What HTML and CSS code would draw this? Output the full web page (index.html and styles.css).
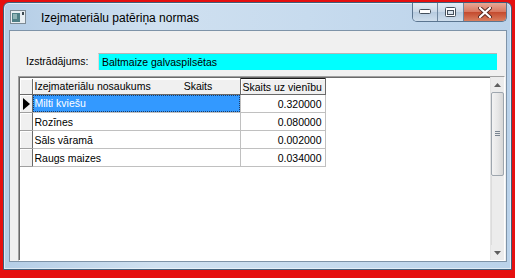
FILE: index.html
```html
<!DOCTYPE html>
<html>
<head>
    <title>Izejmateriālu patēriņa normas</title>
    <link rel="stylesheet" href="styles.css">
</head>
<body>
<div class="screen">
    <div class="window">

        <!-- Title bar -->
        <div class="titlebar">
            <svg class="app-icon" width="16" height="14" viewBox="0 0 16 14">
                <rect x="0.5" y="0.5" width="15" height="13" fill="#e8eef2" stroke="#7d8a94"/>
                <rect x="2" y="3" width="8" height="9" fill="#4f7f86"/>
                <rect x="3" y="4" width="4" height="5" fill="#8fb3b5"/>
                <rect x="12" y="2" width="2" height="3" fill="#3e4a52"/>
            </svg>
            <span class="title">Izejmateriālu patēriņa normas</span>
            <div class="caption-buttons">
                <div class="cap-btn cap-min">
                    <svg width="12" height="6" viewBox="0 0 12 6"><rect x="0.5" y="0.5" width="11" height="4" rx="1" fill="#fff" stroke="#45505c"/></svg>
                </div>
                <div class="cap-btn cap-max">
                    <svg width="11" height="10" viewBox="0 0 11 10"><rect x="0.5" y="0.5" width="10" height="9" rx="1" fill="#fff" stroke="#45505c"/><rect x="2.5" y="3.5" width="6" height="4" fill="#d9e3ec" stroke="#45505c"/></svg>
                </div>
                <div class="cap-btn cap-close">
                    <svg width="14" height="11" viewBox="0 0 14 11"><path d="M2 1 L12 10 M12 1 L2 10" stroke="#5a2a22" stroke-width="4" stroke-linecap="round"/><path d="M2 1 L12 10 M12 1 L2 10" stroke="#fff" stroke-width="2.2" stroke-linecap="round"/></svg>
                </div>
            </div>
        </div>

        <!-- Client area -->
        <div class="client">
            <div class="field-row">
                <span class="field-label">Izstrādājums:</span>
                <div class="field-value">Baltmaize galvaspilsētas</div>
            </div>

            <div class="grid">
                <div class="grid-body">
                    <table class="data">
                        <colgroup>
                            <col class="c-ind"><col class="c-name"><col class="c-qty">
                        </colgroup>
                        <tr class="head">
                            <th class="ind"></th>
                            <th class="h-name"><span>Izejmateriālu nosaukums</span><span class="h-skaits">Skaits</span></th>
                            <th class="h-qty">Skaits uz vienību</th>
                        </tr>
                        <tr>
                            <td class="ind"><span class="arrow"></span></td>
                            <td class="name selected"><span>Milti kviešu</span></td>
                            <td class="num">0.320000</td>
                        </tr>
                        <tr>
                            <td class="ind"></td>
                            <td class="name">Rozīnes</td>
                            <td class="num">0.080000</td>
                        </tr>
                        <tr>
                            <td class="ind"></td>
                            <td class="name">Sāls vāramā</td>
                            <td class="num">0.002000</td>
                        </tr>
                        <tr>
                            <td class="ind"></td>
                            <td class="name">Raugs maizes</td>
                            <td class="num">0.034000</td>
                        </tr>
                    </table>
                </div>

                <div class="vscroll">
                    <div class="sb-arrow">
                        <svg width="7" height="4" viewBox="0 0 7 4"><path d="M0 4 L3.5 0 L7 4 Z" fill="#5e5e5e"/></svg>
                    </div>
                    <div class="sb-thumb">
                        <svg width="5" height="6" viewBox="0 0 5 6"><path d="M0 0.5 H5 M0 2.5 H5 M0 4.5 H5" stroke="#7a8591" stroke-width="1"/></svg>
                    </div>
                    <div class="sb-track"></div>
                    <div class="sb-arrow">
                        <svg width="7" height="4" viewBox="0 0 7 4"><path d="M0 0 L7 0 L3.5 4 Z" fill="#5e5e5e"/></svg>
                    </div>
                </div>
            </div>
        </div>

    </div>
</div>
</body>
</html>
```

FILE: styles.css
```css
body { margin: 0; background: #e50f0f; font-family: "Liberation Sans", Arial, sans-serif; font-size: 10.5px; color: #000; }

.screen { width: 515px; height: 278px; box-sizing: border-box; padding: 2px 3px 8px 3px; }

.window {
    height: 100%;
    box-sizing: border-box;
    display: flex;
    flex-direction: column;
    padding: 0 4px 7px 5px;
    border: 1px solid #3f5e7a;
    border-radius: 6px 6px 0 0;
    background: linear-gradient(90deg, #b4cde6 0%, #cfe0f0 30%, #c7dbee 60%, #bad2ea 100%);
    box-shadow: inset 0 0 0 1px rgba(255,255,255,0.55);
}

/* title bar */
.titlebar { height: 27px; display: flex; align-items: flex-start; }
.app-icon { margin: 7px 0 0 1px; }
.title { margin: 8px 0 0 15px; font-size: 12px; line-height: 14px; color: #000; }
.caption-buttons {
    margin-left: auto;
    display: flex;
    height: 18px;
    border: 1px solid #5b7590;
    border-top: none;
    border-radius: 0 0 5px 5px;
    overflow: hidden;
}
.cap-btn { display: flex; align-items: center; justify-content: center; height: 18px; }
.cap-min, .cap-max { width: 24px; background: linear-gradient(#e3ecf5, #c9d8e7 50%, #b7cbdf 51%, #cfdeec); border-right: 1px solid #6f879f; }
.cap-max { width: 25px; }
.cap-close { width: 42px; background: linear-gradient(#e9a996, #d8775f 50%, #c44a2e 51%, #d97e5e); }

/* client area */
.client {
    flex: 1;
    display: flex;
    flex-direction: column;
    background: #f0f0f0;
    border: 1px solid #7e93a8;
    padding: 0 1px 0 0;
}

.field-row { display: flex; align-items: center; height: 18px; margin-top: 21px; }
.field-label { width: 72px; padding-left: 16px; }
.field-value {
    width: 395px;
    height: 16px;
    line-height: 16px;
    padding-left: 3px;
    background: #00ffff;
    border-top: 1px solid #b6b6b6;
    border-left: 1px solid #dadada;
}

.grid {
    flex: 1;
    display: flex;
    margin: 6px 0 0 8px;
    background: #fff;
    border-top: 1px solid #a0a0a0;
    border-left: 1px solid #a0a0a0;
    border-right: 1px solid #fff;
    border-bottom: 1px solid #fff;
    box-shadow: inset 1px 1px 0 #696969;
}
.grid-body { flex: 1; padding: 1px 0 0 1px; }

.data { border-collapse: collapse; table-layout: fixed; }
.c-ind { width: 12px; }
.c-name { width: 208px; }
.c-qty { width: 85px; }

.data td, .data th { height: 17px; padding: 0; border-right: 1px solid #c0c0c0; border-bottom: 1px solid #c0c0c0; white-space: nowrap; overflow: hidden; font-weight: normal; text-align: left; }
.data tr.head th { height: 15px; background: #f0f0f0; border-right: 1px solid #696969; border-bottom: 1px solid #696969; box-shadow: inset 1px 1px 0 #fff; }
.data th.h-name { padding-left: 2px; }
.h-skaits { margin-left: 33px; }
.data th.h-qty { padding-left: 2px; border: 1px solid #1a1a1a; box-shadow: inset 1px 1px 0 #fff; }

.data td.ind { background: #f0f0f0; border-right: 1px solid #696969; border-bottom: 1px solid #a0a0a0; box-shadow: inset 1px 1px 0 #fff; }
.arrow { display: block; width: 0; height: 0; margin-left: 3px; border-top: 6px solid transparent; border-bottom: 6px solid transparent; border-left: 7px solid #000; }

.data td.name { padding-left: 2px; }
.data td.selected { padding: 0; }
.selected span { display: block; height: 15px; line-height: 15px; padding-left: 1px; background: #3399ff; color: #fff; border: 1px dotted #1c3c66; }
.data td.num { text-align: right; padding-right: 3px; }

/* scrollbar */
.vscroll { width: 13px; display: flex; flex-direction: column; background: #ececec; border-left: 1px solid #e4e4e4; }
.sb-arrow { height: 15px; display: flex; align-items: center; justify-content: center; }
.sb-thumb {
    height: 82px;
    display: flex;
    align-items: center;
    justify-content: center;
    border: 1px solid #9ea6ae;
    border-radius: 2px;
    background: linear-gradient(90deg, #f3f3f3, #e6e6e6 55%, #d6d6d6);
}
.sb-track { flex: 1; border-left: 1px solid #dcdcdc; }
```
